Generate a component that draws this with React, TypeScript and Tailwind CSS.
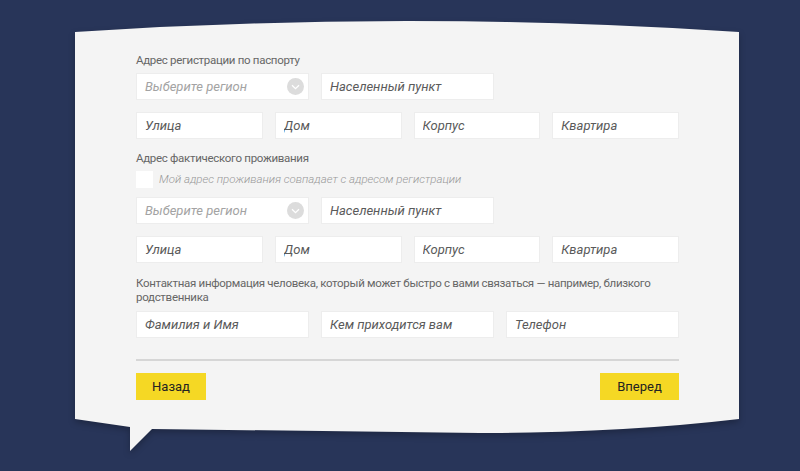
import React from 'react'

const font = { fontFamily: 'Roboto, "Open Sans", sans-serif' }

function Field({ placeholder }: { placeholder: string }) {
  return (
    <input
      type="text"
      placeholder={placeholder}
      className="h-[27px] w-full bg-white border border-[#ededed] px-2 text-[13px] italic text-[#555] placeholder:text-[#5a5a5a] placeholder:italic outline-none"
    />
  )
}

function RegionSelect() {
  return (
    <button
      type="button"
      className="flex h-[27px] w-full items-center justify-between bg-white border border-[#ededed] pl-2 pr-1 text-left text-[13px] italic text-[#a3a3a3]"
    >
      <span>Выберите регион</span>
      <span className="flex h-[17px] w-[17px] items-center justify-center rounded-full bg-[#dcdcdc]">
        <svg width="9" height="6" viewBox="0 0 9 6" fill="none">
          <path d="M1 1.2L4.5 4.6L8 1.2" stroke="#fff" strokeWidth="1.3" />
        </svg>
      </span>
    </button>
  )
}

function AddressRows() {
  return (
    <>
      <div className="grid grid-cols-3 gap-3">
        <RegionSelect />
        <Field placeholder="Населенный пункт" />
      </div>
      <div className="mt-3 grid grid-cols-4 gap-3">
        <Field placeholder="Улица" />
        <Field placeholder="Дом" />
        <Field placeholder="Корпус" />
        <Field placeholder="Квартира" />
      </div>
    </>
  )
}

export default function App() {
  return (
    <div className="relative h-[471px] w-full overflow-hidden bg-[#283559]" style={font}>
      {/* speech bubble */}
      <svg
        className="absolute left-0 top-0 drop-shadow-[0_3px_3px_rgba(0,0,0,0.25)]"
        width="800"
        height="471"
        viewBox="0 0 800 471"
      >
        <path
          d="M75 32 Q407 10 739 32 L739 419 Q620 433 480 433 L152 429 L130 451 L130 427 L75 419 Z"
          fill="#f4f4f4"
        />
      </svg>

      <form className="relative ml-[136px] w-[543px] pt-[52px]">
        <p className="h-4 text-[11.5px] leading-4 tracking-[-0.3px] text-[#666]">
          Адрес регистрации по паспорту
        </p>
        <div className="mt-[5px]">
          <AddressRows />
        </div>

        <p className="mt-[11px] h-4 text-[11.5px] leading-4 tracking-[-0.3px] text-[#666]">
          Адрес фактического проживания
        </p>
        <label className="mt-[5px] flex h-[17px] items-center gap-[6px]">
          <span className="h-[17px] w-[17px] bg-white" />
          <span className="text-[11.5px] font-light italic text-[#999]">
            Мой адрес проживания совпадает с адресом регистрации
          </span>
        </label>
        <div className="mt-[9px]">
          <AddressRows />
        </div>

        <p className="mt-[13px] text-[11.5px] leading-[14px] tracking-[-0.3px] text-[#666]">
          <span className="whitespace-nowrap">
            Контактная информация человека, который может быстро с вами связаться — например, близкого
          </span>
          <br />
          родственника
        </p>
        <div className="mt-[7px] grid grid-cols-3 gap-3">
          <Field placeholder="Фамилия и Имя" />
          <Field placeholder="Кем приходится вам" />
          <Field placeholder="Телефон" />
        </div>

        <div className="mt-[21px] border-t-2 border-[#d6d6d6]" />

        <div className="mt-3 flex justify-between">
          <button type="button" className="h-[27px] w-[70px] bg-[#f5d824] text-[13px] text-[#222]">
            Назад
          </button>
          <button type="button" className="h-[27px] w-[79px] bg-[#f5d824] text-[13px] text-[#222]">
            Вперед
          </button>
        </div>
      </form>
    </div>
  )
}
